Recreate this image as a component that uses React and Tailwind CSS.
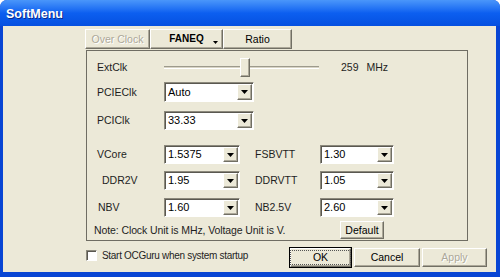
import React from 'react';

const raised =
  'border border-t-white border-l-white border-r-[#716f64] border-b-[#716f64] shadow-[inset_-1px_-1px_0_#aca899]';

function Arrow() {
  return (
    <svg width="7" height="4" viewBox="0 0 7 4">
      <path d="M0 0h7L3.5 4z" fill="#000" />
    </svg>
  );
}

function Select({ value, width }) {
  return (
    <div
      className={`h-full flex items-stretch bg-white border border-t-[#8c897c] border-l-[#8c897c] border-r-white border-b-white shadow-[inset_1px_1px_0_#5a5850] ${width}`}
    >
      <div className="flex-1 flex items-center pl-[3px] text-[11px] text-black">{value}</div>
      <div className={`w-[15px] my-[1px] mr-[1px] bg-[#ece9d8] flex items-center justify-center ${raised}`}>
        <Arrow />
      </div>
    </div>
  );
}

function Label({ children, className = '' }) {
  return <div className={`flex items-center text-[#1e1e1e] ${className}`}>{children}</div>;
}

function Button({ children, className = '', disabled, focused }) {
  return (
    <div
      className={`flex items-center justify-center ${raised} ${
        disabled ? 'text-[#aca899]' : 'text-black'
      } ${focused ? 'outline outline-1 outline-black' : ''} ${className}`}
    >
      {focused ? (
        <span className="border border-dotted border-[#555] px-[22px] py-[1px]">{children}</span>
      ) : (
        children
      )}
    </div>
  );
}

export default function App() {
  return (
    <div className="w-[500px] h-[277px] bg-white font-['Liberation_Sans',Arial,sans-serif] text-[10.5px] leading-none">
      <div className="h-full flex flex-col rounded-t-[7px] overflow-hidden bg-[#0845d4]">
        <div className="h-[26px] shrink-0 flex items-center pl-[6px] pt-[2px] bg-linear-to-b from-[#4a96fa] via-[#0c5ff0] to-[#0650e0]">
          <span className="text-white font-bold text-[12.5px] [text-shadow:1px_1px_0_#0a2a8a]">SoftMenu</span>
        </div>

        <div className="flex-1 flex flex-col pl-[3px] pr-[4px] pb-[5px]">
          <div className="flex-1 flex flex-col bg-[#ece9d8]">
            {/* tabs */}
            <div className="mt-[3px] ml-[82px] h-[20px] flex">
              <Button disabled className="w-[65px] [text-shadow:1px_1px_0_#fff]">Over Clock</Button>
              <div className={`relative w-[73px] flex items-center justify-center font-bold text-[10px] ${raised}`}>
                FANEQ
                <svg className="absolute right-[4px] bottom-[4px]" width="5" height="3" viewBox="0 0 5 3">
                  <path d="M0 0h5L2.5 3z" fill="#000" />
                </svg>
              </div>
              <Button className="w-[69px]">Ratio</Button>
            </div>

            {/* panel */}
            <div className="ml-[83px] mt-[1px] w-[382px] h-[191px] border border-[#6f6d63] flex flex-col">
              <div className="mt-[6px] h-[20px] flex pl-[10px]">
                <Label className="w-[67px]">ExtClk</Label>
                <div className="relative w-[155px] flex items-center">
                  <div className="w-full h-[3px] border-t border-t-[#9d9a8c] border-b border-b-white bg-[#d8d4c4]" />
                  <div className={`absolute left-[76px] top-[1px] w-[10px] h-[19px] bg-[#ece9d8] ${raised}`} />
                </div>
                <Label className="ml-[22px]">259</Label>
                <Label className="ml-[8px]">MHz</Label>
              </div>

              <div className="mt-[5px] h-[20px] flex pl-[10px]">
                <Label className="w-[67px]">PCIEClk</Label>
                <Select value="Auto" width="w-[90px]" />
              </div>

              <div className="mt-[9px] h-[19px] flex pl-[10px]">
                <Label className="w-[67px]">PCIClk</Label>
                <Select value="33.33" width="w-[90px]" />
              </div>

              <div className="mt-[15px] h-[19px] flex pl-[10px]">
                <Label className="w-[67px]">VCore</Label>
                <Select value="1.5375" width="w-[76px]" />
                <Label className="ml-[15px] w-[65px]">FSBVTT</Label>
                <Select value="1.30" width="w-[74px]" />
              </div>

              <div className="mt-[7px] h-[19px] flex pl-[10px]">
                <Label className="w-[67px] pl-[5px]">DDR2V</Label>
                <Select value="1.95" width="w-[76px]" />
                <Label className="ml-[15px] w-[65px]">DDRVTT</Label>
                <Select value="1.05" width="w-[74px]" />
              </div>

              <div className="mt-[8px] h-[19px] flex pl-[10px]">
                <Label className="w-[67px] pl-[1px]">NBV</Label>
                <Select value="1.60" width="w-[76px]" />
                <Label className="ml-[15px] w-[65px]">NB2.5V</Label>
                <Select value="2.60" width="w-[74px]" />
              </div>

              <div className="mt-[4px] h-[18px] flex pl-[7px]">
                <Label className="w-[246px] tracking-[-0.1px]">Note: Clock Unit is MHz, Voltage Unit is V.</Label>
                <Button className="w-[44px]">Default</Button>
              </div>
            </div>

            {/* bottom row */}
            <div className="mt-[7px] h-[19px] flex">
              <div className="ml-[83px] mt-[2px] w-[11px] h-[11px] bg-white border border-t-[#8c897c] border-l-[#8c897c] border-r-white border-b-white shadow-[inset_1px_1px_0_#5a5850]" />
              <Label className="ml-[5px] h-[15px] text-[10px] tracking-[-0.3px]">Start OCGuru when system startup</Label>
              <div className="ml-auto mr-[9px] flex gap-[2px]">
                <Button focused className="w-[61px]">OK</Button>
                <Button className="w-[66px] ml-[1px]">Cancel</Button>
                <Button disabled className="w-[65px] [text-shadow:1px_1px_0_#fff]">Apply</Button>
              </div>
            </div>
          </div>
        </div>
      </div>
    </div>
  );
}
